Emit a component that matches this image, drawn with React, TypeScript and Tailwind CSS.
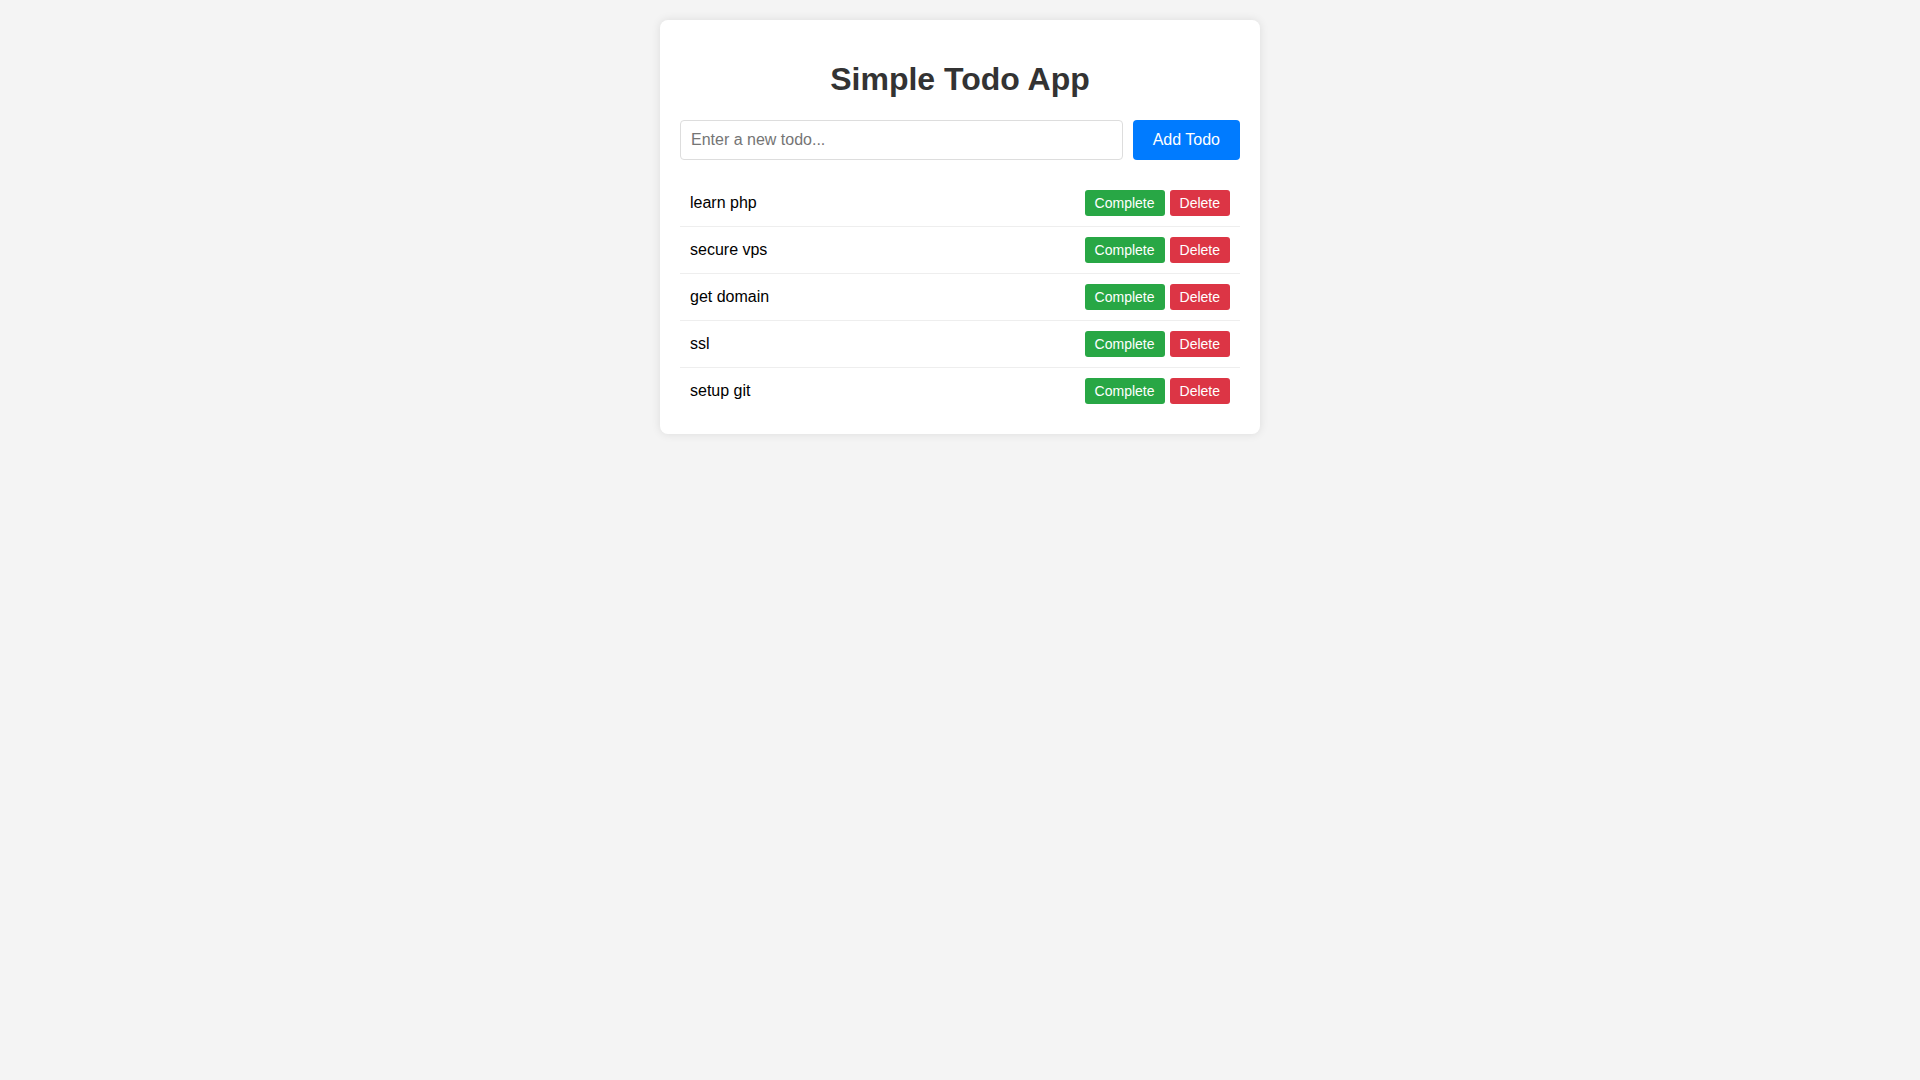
import { useState } from 'react';

interface Todo {
  id: number;
  text: string;
  done: boolean;
}

const initialTodos: Todo[] = [
  { id: 1, text: 'learn php', done: false },
  { id: 2, text: 'secure vps', done: false },
  { id: 3, text: 'get domain', done: false },
  { id: 4, text: 'ssl', done: false },
  { id: 5, text: 'setup git', done: false },
];

export default function App() {
  const [todos, setTodos] = useState<Todo[]>(initialTodos);
  const [text, setText] = useState('');

  const addTodo = () => {
    if (!text.trim()) return;
    setTodos([...todos, { id: Date.now(), text: text.trim(), done: false }]);
    setText('');
  };

  return (
    <div className="min-h-screen bg-[#f4f4f4] pt-5 font-['Liberation_Sans',Arial,sans-serif]">
      <div className="mx-auto max-w-[600px] rounded-lg bg-white p-5 shadow-[0_0_10px_rgba(0,0,0,0.1)]">
        <h1 className="my-[21.44px] text-center text-[32px] font-bold leading-[normal] text-[#333]">
          Simple Todo App
        </h1>

        <div className="mb-5 flex gap-2.5">
          <input
            type="text"
            value={text}
            onChange={(e) => setText(e.target.value)}
            onKeyDown={(e) => e.key === 'Enter' && addTodo()}
            placeholder="Enter a new todo..."
            className="flex-1 rounded border border-[#ddd] p-2.5 text-base leading-[normal] text-black placeholder:text-[#757575] focus:outline-none"
          />
          <button
            onClick={addTodo}
            className="cursor-pointer rounded border-0 bg-[#007bff] px-5 py-2.5 text-base leading-[normal] text-white"
          >
            Add Todo
          </button>
        </div>

        <ul>
          {todos.map((todo) => (
            <li
              key={todo.id}
              className="flex items-center justify-between border-b border-[#eee] p-2.5 last:border-b-0"
            >
              <span className={todo.done ? 'text-base text-[#888] line-through' : 'text-base text-black'}>
                {todo.text}
              </span>
              <div className="flex">
                <button
                  onClick={() =>
                    setTodos(todos.map((t) => (t.id === todo.id ? { ...t, done: !t.done } : t)))
                  }
                  className="cursor-pointer rounded-[3px] bg-[#28a745] px-2.5 py-[5px] text-sm leading-[normal] text-white"
                >
                  Complete
                </button>
                <button
                  onClick={() => setTodos(todos.filter((t) => t.id !== todo.id))}
                  className="ml-[5px] cursor-pointer rounded-[3px] bg-[#dc3545] px-2.5 py-[5px] text-sm leading-[normal] text-white"
                >
                  Delete
                </button>
              </div>
            </li>
          ))}
        </ul>
      </div>
    </div>
  );
}
